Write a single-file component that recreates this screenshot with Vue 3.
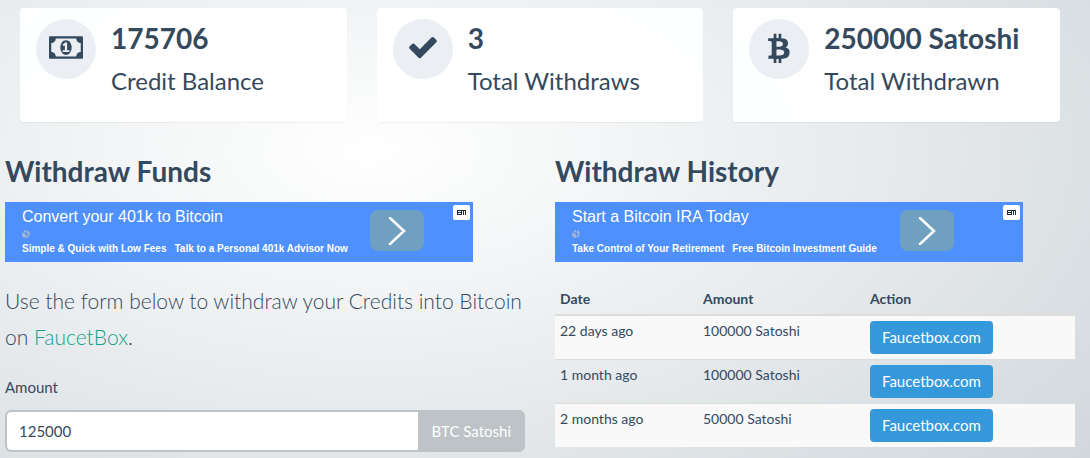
<script setup>
import { ref } from 'vue'

const amount = ref('125000')

const stats = [
  { value: '175706', label: 'Credit Balance', icon: 'money' },
  { value: '3', label: 'Total Withdraws', icon: 'check' },
  { value: '250000 Satoshi', label: 'Total Withdrawn', icon: 'bitcoin' },
]

const icons = {
  money: {
    box: '0 0 1920 1280',
    path: 'M768 896h384v-96h-128v-448h-114l-148 137 77 80q42-37 55-57h2v288h-128v96zm512-256q0 70-21 142t-59.5 134-101.5 101-138 39-138-39-101.5-101-59.5-134-21-142 21-142 59.5-134 101.5-101 138-39 138 39 101.5 101 59.5 134 21 142zm512 256v-512q-106 0-181-75t-75-181h-1152q0 106-75 181t-181 75v512q106 0 181 75t75 181h1152q0-106 75-181t181-75zm128-832v1152q0 26-19 45t-45 19h-1792q-26 0-45-19t-19-45v-1152q0-26 19-45t45-19h1792q26 0 45 19t19 45z',
  },
  check: {
    box: '0 0 1792 1792',
    path: 'M1671 566q0 40-28 68l-724 724-136 136q-28 28-68 28t-68-28l-136-136-362-362q-28-28-28-68t28-68l136-136q28-28 68-28t68 28l294 295 656-657q28-28 68-28t68 28l136 136q28 28 28 68z',
  },
  bitcoin: {
    box: '0 0 1792 1792',
    path: 'M1399 661q18 182-131 258 117 28 175 103t45 214q-7 71-32.5 125t-64.5 89-97 58.5-121.5 34.5-145.5 15v255h-154v-251q-80 0-122-1v252h-154v-255q-18 0-54-.5t-55-.5h-200l31-183h111q50 0 58-51v-402h16q-6-1-16-1v-287q-13-68-89-68h-111v-164l212 1q64 0 97-1v-252h154v247q82-2 122-2v-245h154v252q79 7 140 22.5t113 45 82.5 78 36.5 114.5zm-215 545q0-36-15-64t-37-46-57.5-30.5-65.5-18.5-74-9-69-3-64.5 1-47.5 1v338q8 0 37 .5t48 .5 53-1.5 58.5-4 57-8.5 55.5-14 47.5-21 39.5-30 24.5-40 9.5-51zm-71-476q0-33-12.5-58.5t-30.5-42-48-28-55-16.5-61.5-8-58-2.5-54 1-39.5.5v307q5 0 34.5.5t46.5 0 50-2 55-5.5 51.5-11 48.5-18.5 37-27 27-38.5 9-51z',
  },
}

const panels = [
  {
    id: 'funds',
    heading: 'Withdraw Funds',
    ad: { title: 'Convert your 401k to Bitcoin', lines: ['Simple & Quick with Low Fees', 'Talk to a Personal 401k Advisor Now'] },
  },
  {
    id: 'history',
    heading: 'Withdraw History',
    ad: { title: 'Start a Bitcoin IRA Today', lines: ['Take Control of Your Retirement', 'Free Bitcoin Investment Guide'] },
  },
]

const history = [
  { date: '22 days ago', amount: '100000 Satoshi' },
  { date: '1 month ago', amount: '100000 Satoshi' },
  { date: '2 months ago', amount: '50000 Satoshi' },
]
</script>

<template>
  <main class="page">
    <section class="stats">
      <article v-for="s in stats" :key="s.label" class="card">
        <span class="badge">
          <svg :class="['icon', s.icon]" :viewBox="icons[s.icon].box" aria-hidden="true">
            <path :d="icons[s.icon].path" />
          </svg>
        </span>
        <div>
          <p class="value">{{ s.value }}</p>
          <p class="label">{{ s.label }}</p>
        </div>
      </article>
    </section>

    <div class="columns">
      <section v-for="p in panels" :key="p.id" class="panel">
        <h2>{{ p.heading }}</h2>

        <a :class="['ad', p.id]" href="#">
          <span class="ad-text">
            <span class="ad-title">{{ p.ad.title }}</span>
            <svg class="globe" viewBox="0 0 8 8" aria-hidden="true">
              <path d="M0 2.500L2 3L4.500 5L4 8L1.500 7.500L0 5.500Z M1.500 1L4 0L4.200 2L3 3Z M5 0L7.500 2L8 4.800L6 4.400L4.800 3Z M5.200 5.200L7.700 5.500L6 7.500L4.800 7.800Z" />
            </svg>
            <span class="ad-lines"><span v-for="l in p.ad.lines" :key="l">{{ l }}</span></span>
          </span>
          <span class="ad-go">
            <svg viewBox="0 0 18 28" aria-hidden="true"><path d="M2 1L16 14L2 27" /></svg>
          </span>
          <svg class="ad-mark" viewBox="0 0 17 15" aria-hidden="true">
            <path d="M4 5h9v5h-1v-4h-1v4h-1v-4h-1v4h-5z M5 6v1h3v-1z M5 8v1h3v-1z" />
          </svg>
        </a>

        <template v-if="p.id === 'funds'">
          <p class="lead">Use the form below to withdraw your Credits into Bitcoin on <a href="#">FaucetBox</a>.</p>
          <form @submit.prevent>
            <label for="amount">Amount</label>
            <div class="group">
              <input id="amount" v-model="amount" type="text" />
              <span class="addon">BTC Satoshi</span>
            </div>
          </form>
        </template>

        <table v-else>
          <thead>
            <tr><th class="c-date">Date</th><th class="c-amount">Amount</th><th>Action</th></tr>
          </thead>
          <tbody>
            <tr v-for="h in history" :key="h.date">
              <td>{{ h.date }}</td>
              <td>{{ h.amount }}</td>
              <td><button type="button">Faucetbox.com</button></td>
            </tr>
          </tbody>
        </table>
      </section>
    </div>
  </main>
</template>

<style>
body {
  background: #d8dde0;
}
</style>

<style scoped>
.page {
  min-height: 100vh;
  box-sizing: border-box;
  padding: 8px 15px 6px 5px;
  font-family: Lato, "Liberation Sans", sans-serif;
  color: #34495e;
  background: radial-gradient(850px 430px at 34% 33%, #ffffff 0%, #e8ecee 56%, #d9dee2 92%, #cdd5d9 120%);
}
p, h2 {
  margin: 0;
}
.stats {
  display: grid;
  grid-template-columns: repeat(3, 1fr);
  gap: 30px;
  padding: 0 15px;
}
.card {
  display: flex;
  gap: 15px;
  box-sizing: border-box;
  height: 114px;
  padding: 11px 16px;
  border-radius: 4px;
  background: rgba(255, 255, 255, 0.95);
  box-shadow: 0 1px 1px rgba(0, 0, 0, 0.05);
}
.badge {
  display: flex;
  align-items: center;
  justify-content: center;
  flex: none;
  box-sizing: border-box;
  width: 60px;
  height: 60px;
  padding-bottom: 4px;
  border-radius: 50%;
  background: #ebeff4;
}
.icon {
  width: 32px;
  height: 32px;
  fill: #34495e;
}
.icon.money {
  width: 34px;
  height: 23px;
}
.value {
  font-size: 28px;
  font-weight: 700;
  line-height: 38px;
}
.label {
  font-size: 24px;
  line-height: 48px;
}
.columns {
  display: grid;
  grid-template-columns: repeat(2, 1fr);
  gap: 30px;
  margin-top: 32px;
}
h2 {
  margin-bottom: 14px;
  font-size: 28px;
  font-weight: 700;
  line-height: 34px;
}
.ad {
  position: relative;
  display: flex;
  box-sizing: border-box;
  max-width: 468px;
  height: 60px;
  padding-left: 17px;
  background: #4d90fe;
  color: #fff;
  font-family: "Liberation Sans", Arial, sans-serif;
  text-decoration: none;
}
.ad-text {
  display: flex;
  flex-direction: column;
  width: 348px;
  padding-top: 4px;
}
.history .ad-text {
  width: 328px;
}
.ad-title {
  font-size: 16px;
  line-height: 22px;
}
.globe {
  width: 8px;
  height: 8px;
  margin: 2px 0 4px;
  fill: #a9b4cc;
}
.ad-lines {
  display: flex;
  gap: 8px;
  font-size: 10px;
  font-weight: 700;
  line-height: 14px;
  white-space: nowrap;
}
.ad-go {
  display: flex;
  align-items: center;
  justify-content: center;
  width: 54px;
  height: 41px;
  margin-top: 8px;
  border-radius: 8px;
  background: #6fa0c0;
}
.ad-go svg {
  width: 18px;
  height: 28px;
  fill: none;
  stroke: #fff;
  stroke-width: 2.5;
  stroke-linecap: round;
}
.ad-mark {
  position: absolute;
  top: 3px;
  right: 3px;
  width: 17px;
  height: 15px;
  border-radius: 2px;
  background: #fff;
  fill: #1d2b45;
  fill-rule: evenodd;
}
.lead {
  margin-top: 21px;
  font-size: 21px;
  font-weight: 300;
  line-height: 36px;
}
.lead a {
  color: #16a085;
  text-decoration: none;
}
label {
  display: block;
  margin-top: 20px;
  font-size: 15px;
  line-height: 24px;
}
.group {
  display: flex;
  box-sizing: border-box;
  height: 42px;
  margin-top: 11px;
  overflow: hidden;
  border: 2px solid #bdc3c7;
  border-radius: 6px;
  background: #bdc3c7;
}
input {
  flex: 1;
  min-width: 0;
  padding: 0 12px;
  border: 0;
  border-radius: 4px 0 0 4px;
  outline: 0;
  background: #fff;
  color: #34495e;
  font: 15px/24px Lato, sans-serif;
}
.addon {
  padding: 0 12px 0 14px;
  color: #fff;
  font-size: 15px;
  line-height: 38px;
}
table {
  width: 100%;
  margin-top: 22px;
  border-collapse: separate;
  border-spacing: 0;
  table-layout: fixed;
  font-size: 14px;
  line-height: 20px;
}
th, td {
  padding: 5px;
  text-align: left;
  vertical-align: top;
}
th {
  border-bottom: 2px solid #dddddd;
}
.c-date {
  width: 133px;
}
.c-amount {
  width: 157px;
}
tbody tr:nth-child(odd) {
  background: #f9f9f9;
}
tbody tr + tr td {
  border-top: 1px solid #dddddd;
}
button {
  display: block;
  height: 33px;
  padding: 0 12px;
  border: 0;
  border-radius: 4px;
  background: #3498db;
  color: #fff;
  font: 15px/33px Lato, sans-serif;
}
</style>
